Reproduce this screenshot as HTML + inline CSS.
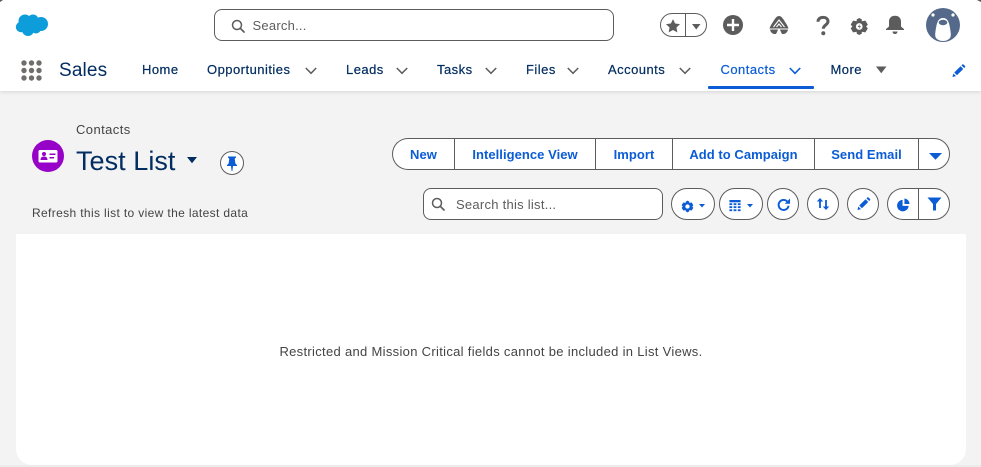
<!DOCTYPE html>
<html><head><meta charset="utf-8"><style>
*{box-sizing:border-box}
html,body{margin:0;padding:0}
body{width:981px;height:467px;position:relative;overflow:hidden;background:#f3f3f3;font-family:"Liberation Sans",sans-serif;color:#032d60}
.a{position:absolute;white-space:nowrap}
svg{position:absolute;overflow:visible}
.nav{font-size:13px;top:62px;line-height:15px;letter-spacing:.47px;color:#032d60;-webkit-text-stroke:.2px}
.btn{position:absolute;top:138px;height:32px;border:1px solid #5c5c5c;background:#fff;border-right:0;color:#0b5cd5;font-size:13px;font-weight:bold;letter-spacing:.05px;line-height:31px;text-align:center}
.ic{position:absolute;background:#fff;border:1px solid #5c5c5c;border-radius:16px;top:188px;height:32px}
</style></head><body>
<div class="a" style="left:0;top:0;width:981px;height:91px;background:#fff;box-shadow:0 1px 4px rgba(0,0,0,.12)"></div>
<svg style="left:0;top:0" width="981" height="6"><path d="M0 0h3L0 2z" fill="#555"/><path d="M981 0h-4l4 2z" fill="#555"/></svg>

<!-- logo -->
<svg style="left:0;top:0" width="60" height="40" fill="#0d9dda"><circle cx="25" cy="21" r="6.500"/><circle cx="33" cy="20" r="5.500"/><circle cx="41" cy="24" r="7"/><circle cx="21" cy="27" r="5.200"/><circle cx="28" cy="30" r="6"/><circle cx="36" cy="28.500" r="5"/><rect x="22" y="20" width="20" height="10"/></svg>

<!-- global search -->
<div class="a" style="left:214px;top:9px;width:400px;height:32px;border:1px solid #5c5c5c;border-radius:8px;background:#fff"></div>
<svg style="left:231px;top:19px" width="14" height="14" viewBox="0 0 14 14"><circle cx="6" cy="6" r="4.500" fill="none" stroke="#5c5c5c" stroke-width="1.500"/><path d="M9.300 9.300L13 13" stroke="#5c5c5c" stroke-width="1.700" stroke-linecap="round"/></svg>
<div class="a" style="left:252.500px;top:18px;font-size:13px;line-height:15px;letter-spacing:.23px;color:#5c5c5c">Search...</div>

<!-- favorites -->
<div class="a" style="left:660px;top:13px;width:47px;height:24px;border:1px solid #5c5c5c;border-radius:12px;background:#fff"></div>
<div class="a" style="left:685px;top:13px;width:1px;height:24px;background:#5c5c5c"></div>
<svg style="left:665px;top:17.500px" width="16" height="15" viewBox="0 0 18 16"><path d="M9 .800l2.400 5 5.500.700-4 3.800 1 5.400L9 13.100l-4.900 2.600 1-5.400-4-3.800 5.500-.700z" fill="#5c5c5c"/></svg>
<svg style="left:692px;top:24px" width="9" height="6"><path d="M0 0h8.500L4.250 5.500z" fill="#5c5c5c"/></svg>
<!-- plus -->
<svg style="left:723px;top:15px" width="20" height="20" viewBox="0 0 20 20"><circle cx="10" cy="10" r="10" fill="#5c5c5c"/><path d="M10 4v12M4 10h12" stroke="#fff" stroke-width="2.400"/></svg>
<!-- trailhead -->
<svg style="left:769px;top:15px" width="20" height="20" viewBox="0 0 20 20"><path d="M10 1C12 1 13 2.500 14.500 4.500L18 10C19 12 19.500 13 19.500 13.500H.500C.500 13 1 12 2 10L5.500 4.500C7 2.500 8 1 10 1z" fill="#5c5c5c"/><path d="M4.500 12L10 5 15.500 12M7.500 12L10 9l2.500 3" fill="none" stroke="#fff" stroke-width="1.100"/><path d="M1 14.500h8l-.500 1.500-1.500 3H5C3 18.500 1.500 17 1 14.500zM11 14.500h8c-.500 2.500-2 4-4 4.500h-2l-1.500-3z" fill="#5c5c5c"/></svg>
<!-- help -->
<svg style="left:815px;top:15px" width="16" height="21" viewBox="0 0 16 21"><path d="M3 6.800C3 4 5 2.400 8 2.400c3 0 5 1.600 5 4 0 3.500-4.700 3.500-4.700 7.300" fill="none" stroke="#5c5c5c" stroke-width="3"/><circle cx="8.300" cy="18.200" r="2" fill="#5c5c5c"/></svg>
<!-- gear -->
<svg style="left:850px;top:16.500px" width="18.500" height="19" viewBox="0 0 18 20"><path d="M9 1l2.700 1.500v2l3.800-.700L18 8l-1.800 2L18 12l-2.500 4.200-3.800-.700v2L9 19l-2.700-1.500v-2l-3.800.700L0 12l1.800-2L0 8l2.500-4.200 3.800.700v-2z" fill="#5c5c5c"/><circle cx="9" cy="10" r="3.500" fill="#fff"/><path d="M9.800 7.200L7.300 10.500h2l-.800 2.500 2.300-3.400H9z" fill="#5c5c5c"/></svg>
<!-- bell -->
<svg style="left:885px;top:15px" width="20" height="20" viewBox="0 0 20 20"><path d="M10 .800c3.700 0 6 2.400 6 5.700v4.500c0 1.300 3 2.500 3 3.300v.700H1v-.700c0-.800 3-2 3-3.300V6.500C4 3.200 6.300.800 10 .800z" fill="#5c5c5c"/><path d="M7.500 16.500h5c0 1.500-1.100 2.500-2.500 2.500s-2.500-1-2.500-2.500z" fill="#5c5c5c"/></svg>
<!-- avatar -->
<svg style="left:926px;top:8px" width="34" height="34" viewBox="0 0 34 34"><circle cx="17" cy="17" r="17" fill="#55698b"/><path d="M17 10C21.500 10 23 14 24 20 25 26 25.500 29 23 31 21 32.500 19 33 17 33 15 33 13 32.500 11 31 8.500 29 9 26 10 20 11 14 12.500 10 17 10z" fill="#fff"/><ellipse cx="17" cy="14.500" rx="4.300" ry="2.700" fill="#55698b"/><circle cx="7" cy="7" r="1.600" fill="#fff"/><circle cx="27" cy="7" r="1.600" fill="#fff"/></svg>

<!-- app launcher -->
<svg style="left:21px;top:60px" width="22" height="22" fill="#706e6b"><circle cx="3" cy="3" r="2.700"/><circle cx="10.500" cy="3" r="2.700"/><circle cx="18" cy="3" r="2.700"/><circle cx="3" cy="10.500" r="2.700"/><circle cx="10.500" cy="10.500" r="2.700"/><circle cx="18" cy="10.500" r="2.700"/><circle cx="3" cy="18" r="2.700"/><circle cx="10.500" cy="18" r="2.700"/><circle cx="18" cy="18" r="2.700"/></svg>
<div class="a" style="left:59px;top:60px;font-size:19px;line-height:22px;letter-spacing:.15px;color:#032d60">Sales</div>

<div class="a nav" style="left:142px">Home</div>
<div class="a nav" style="left:207px">Opportunities</div>
<div class="a nav" style="left:346px">Leads</div>
<div class="a nav" style="left:437px">Tasks</div>
<div class="a nav" style="left:526px">Files</div>
<div class="a nav" style="left:608px">Accounts</div>
<div class="a nav" style="left:720.500px;color:#0b5cd5">Contacts</div>
<div class="a nav" style="left:830.500px">More</div>

<svg style="left:305px;top:67px" width="12" height="8"><path d="M.800 1L6 6.300 11.200 1" fill="none" stroke="#5c5c5c" stroke-width="1.500"/></svg>
<svg style="left:396px;top:67px" width="12" height="8"><path d="M.800 1L6 6.300 11.200 1" fill="none" stroke="#5c5c5c" stroke-width="1.500"/></svg>
<svg style="left:485px;top:67px" width="12" height="8"><path d="M.800 1L6 6.300 11.200 1" fill="none" stroke="#5c5c5c" stroke-width="1.500"/></svg>
<svg style="left:567px;top:67px" width="12" height="8"><path d="M.800 1L6 6.300 11.200 1" fill="none" stroke="#5c5c5c" stroke-width="1.500"/></svg>
<svg style="left:679px;top:67px" width="12" height="8"><path d="M.800 1L6 6.300 11.200 1" fill="none" stroke="#5c5c5c" stroke-width="1.500"/></svg>
<svg style="left:789px;top:67px" width="12" height="8"><path d="M.800 1L6 6.300 11.200 1" fill="none" stroke="#0b5cd5" stroke-width="1.600"/></svg>
<svg style="left:876px;top:66px" width="11" height="8"><path d="M0 .500h10.500L5.250 7.300z" fill="#5c5c5c"/></svg>
<div class="a" style="left:708px;top:86px;width:106px;height:3px;background:#0b5cd5;border-radius:1px"></div>
<svg style="left:952px;top:64px" width="13.500" height="13.500" viewBox="0 0 15 15" fill="#0b5cd5"><path d="M.500 14.500l1-4 3 3zM2.500 9.500l7-7 3 3-7 7zM10.500 1.500l1-1a1 1 0 0 1 1.300 0l1.700 1.700a1 1 0 0 1 0 1.300l-1 1z"/></svg>

<!-- header -->
<div class="a" style="left:76px;top:121.500px;font-size:13px;line-height:15px;letter-spacing:.42px;color:#444">Contacts</div>
<svg style="left:32px;top:140px" width="32" height="32" viewBox="0 0 32 32"><circle cx="16" cy="16" r="16" fill="#9602c7"/><rect x="6.500" y="10" width="19" height="12.500" rx="1.500" fill="#fff"/><circle cx="12" cy="14" r="2" fill="#9602c7"/><path d="M8.500 20c0-2.300 1.200-3.500 3.500-3.500s3.500 1.200 3.500 3.500z" fill="#9602c7"/><rect x="17.500" y="13.500" width="6" height="1.500" fill="#9602c7"/><rect x="17.500" y="17" width="4.500" height="1.500" fill="#9602c7"/></svg>
<div class="a" style="left:76px;top:145px;font-size:27px;line-height:32px;letter-spacing:.05px;color:#032d60">Test List</div>
<svg style="left:187px;top:157px" width="10" height="7"><path d="M0 0h10L5 6.300z" fill="#032d60"/></svg>
<svg style="left:220px;top:151px" width="24" height="24" viewBox="0 0 24 24"><circle cx="12" cy="12" r="11.500" fill="#fff" stroke="#5c5c5c"/><path d="M8 5.500h8v1.300l-1.300.700.700 5 1.600 1.500v1h-4l-.600 5h-.800l-.600-5H7v-1l1.600-1.500.700-5L8 6.800z" fill="#0b5cd5"/></svg>

<!-- action bar -->
<div class="btn" style="left:392px;width:62px;border-radius:16px 0 0 16px">New</div>
<div class="btn" style="left:454px;width:141px">Intelligence View</div>
<div class="btn" style="left:595px;width:77px">Import</div>
<div class="btn" style="left:672px;width:142px">Add to Campaign</div>
<div class="btn" style="left:814px;width:104px">Send Email</div>
<div class="btn" style="left:918px;width:32px;border-right:1px solid #5c5c5c;border-radius:0 16px 16px 0"></div>
<svg style="left:929px;top:153px" width="13" height="7"><path d="M0 0h13L6.500 6.800z" fill="#0b5cd5"/></svg>

<!-- list search -->
<div class="a" style="left:423px;top:188px;width:240px;height:32px;border:1px solid #5c5c5c;border-radius:8px;background:#fff"></div>
<svg style="left:431px;top:197px" width="14" height="14" viewBox="0 0 14 14"><circle cx="6" cy="6" r="4.500" fill="none" stroke="#5c5c5c" stroke-width="1.500"/><path d="M9.300 9.300L13 13" stroke="#5c5c5c" stroke-width="1.700" stroke-linecap="round"/></svg>
<div class="a" style="left:456px;top:197px;font-size:13px;line-height:15px;letter-spacing:.26px;color:#5c5c5c">Search this list...</div>

<!-- toolbar -->
<div class="ic" style="left:671px;width:44px"></div>
<svg style="left:681px;top:199.500px" width="13" height="13" viewBox="0 0 18 20"><path d="M9 1l2.700 1.500v2l3.800-.700L18 8l-1.800 2L18 12l-2.500 4.200-3.800-.700v2L9 19l-2.700-1.500v-2l-3.800.700L0 12l1.800-2L0 8l2.500-4.200 3.800.700v-2z" fill="#0b5cd5"/><circle cx="9" cy="10" r="3.300" fill="#fff"/></svg>
<svg style="left:699px;top:204px" width="6" height="4"><path d="M0 0h6L3 3.500z" fill="#0b5cd5"/></svg>
<div class="ic" style="left:719px;width:44px"></div>
<svg style="left:729px;top:200px" width="12" height="13" viewBox="0 0 12 14" fill="#0b5cd5"><rect width="12" height="2.500"/><rect y="3.500" width="3" height="2"/><rect x="4.500" y="3.500" width="3" height="2"/><rect x="9" y="3.500" width="3" height="2"/><rect y="6.700" width="3" height="2"/><rect x="4.500" y="6.700" width="3" height="2"/><rect x="9" y="6.700" width="3" height="2"/><rect y="10" width="3" height="2"/><rect x="4.500" y="10" width="3" height="2"/><rect x="9" y="10" width="3" height="2"/></svg>
<svg style="left:747px;top:204px" width="6" height="4"><path d="M0 0h6L3 3.500z" fill="#0b5cd5"/></svg>
<div class="ic" style="left:767px;width:32px"></div>
<svg style="left:777px;top:197.500px" width="13.500" height="13.500" viewBox="0 0 14 14"><path d="M10.500 3.500A5.200 5.200 0 1 0 12 8" fill="none" stroke="#0b5cd5" stroke-width="2"/><path d="M13.500 .500v5.500H8z" fill="#0b5cd5"/></svg>
<div class="ic" style="left:807px;width:32px"></div>
<svg style="left:816px;top:197px" width="14" height="14" viewBox="0 0 14 14"><path d="M4 11V3" stroke="#0b5cd5" stroke-width="1.800"/><path d="M.800 4.500L4 1l3.200 3.500z" fill="#0b5cd5"/><path d="M10 3v8" stroke="#0b5cd5" stroke-width="1.800"/><path d="M6.800 9.500L10 13l3.200-3.500z" fill="#0b5cd5"/></svg>
<div class="ic" style="left:847px;width:32px"></div>
<svg style="left:857px;top:197px" width="13.500" height="13.500" viewBox="0 0 15 15" fill="#0b5cd5"><path d="M.500 14.500l1-4 3 3zM2.500 9.500l7-7 3 3-7 7zM10.500 1.500l1-1a1 1 0 0 1 1.300 0l1.700 1.700a1 1 0 0 1 0 1.300l-1 1z"/></svg>
<div class="ic" style="left:887px;width:32px;border-radius:16px 0 0 16px;border-right:0"></div>
<div class="ic" style="left:918px;width:32px;border-radius:0 16px 16px 0"></div>
<svg style="left:897px;top:198px" width="13" height="13" viewBox="0 0 14 14" fill="#0b5cd5"><path d="M6 2v6.500h6.500A6.200 6.200 0 1 1 6 2z"/><path d="M8 .500A6 6 0 0 1 13.500 6.500H8z"/></svg>
<svg style="left:927px;top:197px" width="15" height="14" viewBox="0 0 14 14"><path d="M0 .500h14L8.500 7v6.500h-3V7z" fill="#0b5cd5"/></svg>

<div class="a" style="left:32px;top:206px;font-size:12px;line-height:15px;letter-spacing:.36px;color:#444">Refresh this list to view the latest data</div>

<!-- panel -->
<div class="a" style="left:16px;top:234px;width:950px;height:231px;background:#fff;border-radius:0 0 16px 16px"></div>
<div class="a" style="left:0;top:465px;width:981px;height:2px;background:#ececec"></div>
<div class="a" style="left:16px;width:950px;text-align:center;top:344px;font-size:13px;line-height:15px;letter-spacing:.31px;color:#444">Restricted and Mission Critical fields cannot be included in List Views.</div>
</body></html>
